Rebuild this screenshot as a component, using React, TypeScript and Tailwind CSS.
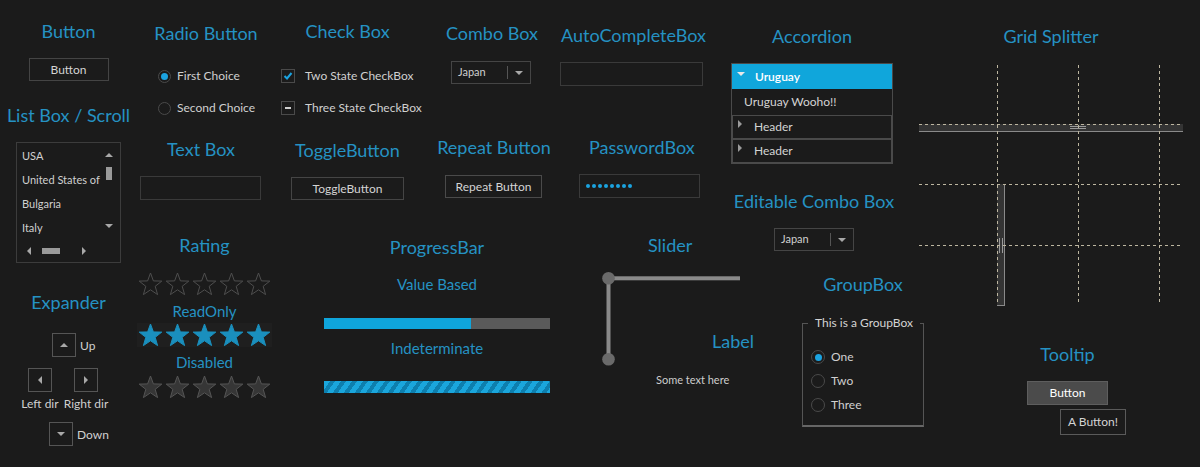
import React from "react";

function Title({ children, className = "" }: { children: React.ReactNode; className?: string }) {
  return (
    <div className={"text-[18px] leading-[24px] text-[#2592c3] whitespace-nowrap " + className}>{children}</div>
  );
}

function Sub({ children, className = "" }: { children: React.ReactNode; className?: string }) {
  return (
    <div className={"text-[15px] leading-[20px] text-[#2592c3] whitespace-nowrap " + className}>{children}</div>
  );
}

function TriUp({ c = "border-b-[#a8a8a8]" }: { c?: string }) {
  return <div className={"w-0 h-0 border-x-[4px] border-x-transparent border-b-[4px] " + c} />;
}
function TriDown({ c = "border-t-[#a8a8a8]" }: { c?: string }) {
  return <div className={"w-0 h-0 border-x-[4px] border-x-transparent border-t-[4px] " + c} />;
}
function TriLeft() {
  return <div className="w-0 h-0 border-y-[4px] border-y-transparent border-r-[4px] border-r-[#a8a8a8]" />;
}
function TriRight({ c = "border-l-[#a8a8a8]" }: { c?: string }) {
  return <div className={"w-0 h-0 border-y-[4px] border-y-transparent border-l-[4px] " + c} />;
}

function Star({ fill, stroke }: { fill: string; stroke: string }) {
  return (
    <svg width="27" height="24" viewBox="0 0 27 24">
      <polygon
        points="13.5,1 16.4,8.9 24.8,9.1 18.2,14.3 20.6,22.6 13.5,17.8 6.4,22.6 8.8,14.3 2.2,9.1 10.6,8.9"
        fill={fill}
        stroke={stroke}
        strokeWidth="1"
        strokeLinejoin="miter"
      />
    </svg>
  );
}

function Stars({ fill, stroke, className = "" }: { fill: string; stroke: string; className?: string }) {
  return (
    <div className={"flex " + className}>
      {[0, 1, 2, 3, 4].map((i) => (
        <Star key={i} fill={fill} stroke={stroke} />
      ))}
    </div>
  );
}

function Combo({ className = "" }: { className?: string }) {
  return (
    <div className={"w-[80px] h-[23px] border border-[#454545] flex items-center " + className}>
      <div className="flex-1 pl-[6px] text-[11px] text-[#d0d0d0]">Japan</div>
      <div className="w-px h-[13px] bg-[#555]" />
      <div className="w-[22px] flex items-center justify-center">
        <TriDown />
      </div>
    </div>
  );
}

function Radio({ checked, label, size = "w-[13px] h-[13px]" }: { checked?: boolean; label: string; size?: string }) {
  return (
    <div className="flex items-center h-[20px]">
      <div className={"rounded-full border border-[#4a4a4a] flex items-center justify-center " + size}>
        {checked && <div className="w-[7px] h-[7px] rounded-full bg-[#1ba3e0]" />}
      </div>
      <div className="ml-[6px] text-[12px] text-[#d0d0d0] whitespace-nowrap">{label}</div>
    </div>
  );
}

function ArrowBox({ children }: { children: React.ReactNode }) {
  return (
    <div className="w-[24px] h-[24px] border border-[#555] flex items-center justify-center">{children}</div>
  );
}

export default function App() {
  return (
    <div className="w-[1200px] h-[467px] bg-[#1b1b1b] flex overflow-hidden font-['Lato',sans-serif] text-[#d0d0d0]">
      {/* Column A */}
      <div className="w-[137px] shrink-0 flex flex-col items-center">
        <Title className="mt-[19px]">Button</Title>
        <div className="mt-[15px] w-[80px] h-[23px] border border-[#444] flex items-center justify-center text-[12px] text-[#d4d4d4]">
          Button
        </div>
        <Title className="mt-[22px]">List Box / Scroll</Title>
        <div className="mt-[15px] w-[105px] h-[121px] border border-[#3c3c3c] flex flex-col">
          <div className="flex h-[97px]">
            <div className="w-[84px] pl-[5px] pt-[1px] flex flex-col text-[11px] text-[#d0d0d0]">
              <div className="h-[24px] leading-[24px] whitespace-nowrap">USA</div>
              <div className="h-[24px] leading-[24px] whitespace-nowrap">United States of</div>
              <div className="h-[24px] leading-[24px] whitespace-nowrap">Bulgaria</div>
              <div className="h-[24px] leading-[24px] whitespace-nowrap">Italy</div>
            </div>
            <div className="w-[16px] flex flex-col items-center">
              <div className="mt-[10px]">
                <TriUp />
              </div>
              <div className="mt-[10px] w-[6px] h-[13px] bg-[#9a9a9a]" />
              <div className="mt-[44px]">
                <TriDown />
              </div>
            </div>
          </div>
          <div className="flex items-center h-[22px]">
            <div className="ml-[10px]">
              <TriLeft />
            </div>
            <div className="ml-[11px] w-[18px] h-[6px] bg-[#9a9a9a]" />
            <div className="ml-[22px]">
              <TriRight />
            </div>
          </div>
        </div>
        <Title className="mt-[27px]">Expander</Title>
        <div className="w-full flex flex-col items-start text-[12px] text-[#d0d0d0]">
          <div className="mt-[19px] ml-[52px] flex items-center gap-[4px]">
            <ArrowBox>
              <TriUp />
            </ArrowBox>
            <span className="mt-[1px]">Up</span>
          </div>
          <div className="mt-[11px] flex">
            <div className="ml-[20px] w-[40px] flex flex-col items-center">
              <ArrowBox>
                <TriLeft />
              </ArrowBox>
              <div className="mt-[4px] leading-[16px] whitespace-nowrap">Left dir</div>
            </div>
            <div className="ml-[4px] w-[44px] flex flex-col items-center">
              <ArrowBox>
                <TriRight />
              </ArrowBox>
              <div className="mt-[4px] leading-[16px] whitespace-nowrap">Right dir</div>
            </div>
          </div>
          <div className="mt-[10px] ml-[49px] flex items-center gap-[4px]">
            <ArrowBox>
              <TriDown />
            </ArrowBox>
            <span className="mt-[2px]">Down</span>
          </div>
        </div>
      </div>

      {/* Column B */}
      <div className="w-[138px] shrink-0 flex flex-col items-center">
        <Title className="mt-[21px]">Radio Button</Title>
        <div className="self-start ml-[21px] mt-[21px]">
          <Radio checked label="First Choice" />
        </div>
        <div className="self-start ml-[21px] mt-[12px]">
          <Radio label="Second Choice" />
        </div>
        <Title className="mt-[19px] mr-[10px]">Text Box</Title>
        <div className="self-start ml-[3px] mt-[15px] w-[121px] h-[24px] border border-[#3a3a3a]" />
        <Title className="mt-[33px] mr-[3px]">Rating</Title>
        <Stars className="self-start mt-[15px]" fill="none" stroke="#4e4e4e" />
        <Sub className="mt-[5px] mr-[3px]">ReadOnly</Sub>
        <Stars className="self-start mt-[2px] bg-[#1f1f1f]" fill="#1a8fbd" stroke="#1a8fbd" />
        <Sub className="mt-[5px] mr-[3px]">Disabled</Sub>
        <Stars className="self-start mt-[3px]" fill="#363636" stroke="#555" />
      </div>

      {/* Column C */}
      <div className="w-[285px] shrink-0 flex flex-col">
        <div className="flex">
          <div className="w-[145px] flex flex-col items-center">
            <Title className="mt-[19px]">Check Box</Title>
            <div className="self-start ml-[6px] mt-[23px] h-[20px] flex items-center">
              <div className="w-[14px] h-[14px] border border-[#4a4a4a] flex items-center justify-center">
                <svg width="10" height="10" viewBox="0 0 10 10">
                  <polyline points="1.5,5 4,7.5 8.5,2" fill="none" stroke="#1ba3e0" strokeWidth="2" />
                </svg>
              </div>
              <div className="ml-[10px] text-[12px] whitespace-nowrap">Two State CheckBox</div>
            </div>
            <div className="self-start ml-[6px] mt-[12px] h-[20px] flex items-center">
              <div className="w-[14px] h-[14px] border border-[#4a4a4a] flex items-center justify-center">
                <div className="w-[6px] h-[2px] bg-[#cfcfcf]" />
              </div>
              <div className="ml-[10px] text-[12px] whitespace-nowrap">Three State CheckBox</div>
            </div>
            <Title className="mt-[20px]">ToggleButton</Title>
            <div className="mt-[15px] w-[113px] h-[23px] border border-[#454545] flex items-center justify-center text-[12px] text-[#d4d4d4]">
              ToggleButton
            </div>
          </div>
          <div className="w-[140px] flex flex-col items-center">
            <Title className="mt-[21px] ml-[4px]">Combo Box</Title>
            <Combo className="mt-[16px] ml-[2px]" />
            <Title className="mt-[51px] ml-[8px]">Repeat Button</Title>
            <div className="mt-[16px] ml-[7px] w-[97px] h-[23px] border border-[#4a4a4a] flex items-center justify-center text-[12px] text-[#d4d4d4]">
              Repeat Button
            </div>
          </div>
        </div>
        <div className="ml-[49px] w-[226px] flex flex-col items-center">
          <Title className="mt-[35px]">ProgressBar</Title>
          <Sub className="mt-[15px]">Value Based</Sub>
          <div className="mt-[24px] w-full h-[11px] flex">
            <div className="w-[147px] bg-[#0fa5db]" />
            <div className="flex-1 bg-[#5a5a5a]" />
          </div>
          <Sub className="mt-[9px]">Indeterminate</Sub>
          <div className="mt-[23px] w-full h-[12px] bg-[repeating-linear-gradient(125deg,#1aa6dc_0px,#1aa6dc_5px,#0d7fae_5px,#0d7fae_9px)]" />
        </div>
      </div>

      {/* Column D */}
      <div className="w-[355px] shrink-0 flex">
        <div className="w-[165px] shrink-0 flex flex-col items-start">
          <Title className="mt-[23px] ml-[1px]">AutoCompleteBox</Title>
          <div className="mt-[15px] w-[143px] h-[24px] border border-[#3a3a3a]" />
          <Title className="mt-[49px] ml-[29px]">PasswordBox</Title>
          <div className="mt-[15px] ml-[19px] w-[121px] h-[24px] border border-[#3a3a3a] flex items-center pl-[6px] gap-[2px]">
            {[0, 1, 2, 3, 4, 5, 6, 7].map((i) => (
              <div key={i} className="w-[4px] h-[4px] rounded-full bg-[#1ba3e0]" />
            ))}
          </div>
          <Title className="mt-[35px] ml-[88px]">Slider</Title>
          <div className="mt-[15px] ml-[42px] flex items-start">
            <svg width="138" height="94" viewBox="0 0 138 94" className="shrink-0">
              <rect x="6.5" y="4.3" width="131.5" height="4" fill="#8a8a8a" />
              <rect x="4.5" y="6.3" width="4" height="81" fill="#8a8a8a" />
              <circle cx="6.5" cy="6.3" r="6.3" fill="#6a6a6a" />
              <circle cx="6.5" cy="87.3" r="6.3" fill="#6a6a6a" />
            </svg>
            <Title className="mt-[57px] ml-[-28px]">Label</Title>
          </div>
          <div className="mt-[7px] ml-[96px] text-[11px] leading-[14px] text-[#cdcdcd] whitespace-nowrap">Some text here</div>
        </div>
        <div className="w-[190px] shrink-0 flex flex-col items-start">
          <div className="ml-[6px] w-[162px] flex flex-col items-center">
            <Title className="mt-[24px]">Accordion</Title>
            <div className="mt-[15px] w-[162px] h-[101px] border border-[#4a4a4a] flex flex-col">
              <div className="h-[25px] bg-[#10a6db] flex items-center">
                <div className="ml-[5px] mb-[6px]">
                  <TriDown c="border-t-[#e8e8e8]" />
                </div>
                <div className="ml-[10px] text-[12px] font-semibold text-white">Uruguay</div>
              </div>
              <div className="h-[26px] flex items-center pl-[12px] text-[12px] text-[#d4d4d4]">Uruguay Wooho!!</div>
              <div className="h-[24px] border border-[#4a4a4a] flex items-center">
                <div className="ml-[5px] mb-[6px]">
                  <TriRight c="border-l-[#9a9a9a]" />
                </div>
                <div className="ml-[12px] text-[12px] text-[#d4d4d4]">Header</div>
              </div>
              <div className="h-[24px] border border-[#4a4a4a] flex items-center">
                <div className="ml-[5px] mb-[6px]">
                  <TriRight c="border-l-[#9a9a9a]" />
                </div>
                <div className="ml-[12px] text-[12px] text-[#d4d4d4]">Header</div>
              </div>
            </div>
            <Title className="mt-[25px] ml-[4px]">Editable Combo Box</Title>
            <Combo className="mt-[15px] ml-[4px]" />
          </div>
          <div className="ml-[77px] w-[122px] flex flex-col items-center">
            <Title className="mt-[21px]">GroupBox</Title>
            <fieldset className="mt-[19px] w-[122px] h-[112px] border border-[#555] border-b-[2px] border-b-[#666]">
              <legend className="ml-[5px] px-[7px] text-[12px] leading-[16px] text-[#d4d4d4]">This is a GroupBox</legend>
              <div className="ml-[8px] mt-[16px] flex flex-col gap-[4px]">
                <Radio checked label="One" size="w-[14px] h-[14px]" />
                <Radio label="Two" size="w-[14px] h-[14px]" />
                <Radio label="Three" size="w-[14px] h-[14px]" />
              </div>
            </fieldset>
          </div>
        </div>
      </div>

      {/* Column E */}
      <div className="w-[285px] shrink-0 flex flex-col items-start">
        <div className="ml-[4px] w-[264px] flex flex-col items-center">
          <Title className="mt-[24px]">Grid Splitter</Title>
          <svg width="264" height="241" viewBox="0 0 264 241" className="mt-[17px]">
            <rect x="0" y="59" width="264" height="7.5" fill="#343434" />
            <line x1="0" y1="66.5" x2="264" y2="66.5" stroke="#8a8a8a" strokeWidth="1" />
            <line x1="151" y1="61.5" x2="167" y2="61.5" stroke="#9a9a9a" strokeWidth="1" />
            <line x1="151" y1="63.5" x2="167" y2="63.5" stroke="#9a9a9a" strokeWidth="1" />
            <rect x="78" y="119" width="7.5" height="121" fill="#343434" />
            <line x1="85.5" y1="119" x2="85.5" y2="240.5" stroke="#8a8a8a" strokeWidth="1" />
            <line x1="78" y1="240.5" x2="86" y2="240.5" stroke="#8a8a8a" strokeWidth="1" />
            <line x1="80.5" y1="173" x2="80.5" y2="188" stroke="#9a9a9a" strokeWidth="1" />
            <line x1="83.5" y1="173" x2="83.5" y2="188" stroke="#9a9a9a" strokeWidth="1" />
            <g stroke="#bdb6a0" strokeWidth="1" strokeDasharray="3 3">
              <line x1="78.5" y1="0" x2="78.5" y2="240" />
              <line x1="159.5" y1="0" x2="159.5" y2="240" />
              <line x1="240.5" y1="0" x2="240.5" y2="240" />
              <line x1="0" y1="59.5" x2="264" y2="59.5" />
              <line x1="0" y1="119.5" x2="264" y2="119.5" />
              <line x1="0" y1="180.5" x2="264" y2="180.5" />
            </g>
          </svg>
        </div>
        <div className="ml-[112px] w-[81px] flex flex-col items-center">
          <Title className="mt-[36px]">Tooltip</Title>
          <div className="mt-[15px] w-[81px] h-[24px] bg-[#4b4b4b] border border-[#5e5e5e] flex items-center justify-center text-[12px] text-white">
            Button
          </div>
          <div className="self-start ml-[33px] mt-[4px] h-[26px] px-[7px] border border-[#5a5a5a] bg-[#1b1b1b] flex items-center text-[12px] text-[#d4d4d4] whitespace-nowrap">
            A Button!
          </div>
        </div>
      </div>
    </div>
  );
}
